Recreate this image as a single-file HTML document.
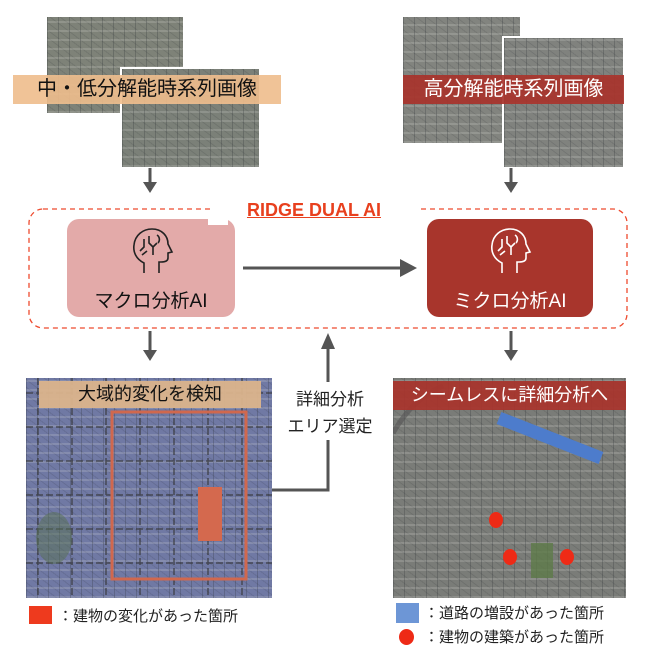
<!DOCTYPE html>
<html><head><meta charset="utf-8"><style>
body{margin:0;width:661px;height:653px;background:#fff;position:relative;overflow:hidden;font-family:"Liberation Sans","Noto Sans CJK JP",sans-serif}
.a{position:absolute}
.sat{position:absolute;background:#7c7f7c;background-image:repeating-linear-gradient(90deg,rgba(40,45,50,.25) 0 1px,transparent 1px 11px),repeating-linear-gradient(0deg,rgba(230,230,225,.18) 0 2px,transparent 2px 9px),repeating-linear-gradient(37deg,rgba(30,35,40,.12) 0 1px,transparent 1px 6px)}
.lbl{position:absolute;text-align:center;font-size:20px;line-height:30px;white-space:nowrap}
</style></head><body>

<!-- top-left images -->
<div class="sat" style="left:47px;top:17px;width:136px;height:96px;background-color:#7e8278"></div>
<div class="sat" style="left:120px;top:67px;width:137px;height:98px;background-color:#7b8078;border-left:2px solid #fff;border-top:2px solid #fff"></div>
<div class="lbl" style="left:13px;top:75px;width:268px;height:29px;line-height:29px;background:rgba(238,188,140,.9);color:#111">中・低分解能時系列画像</div>

<!-- top-right images -->
<div class="sat" style="left:403px;top:17px;width:117px;height:126px;background-color:#82847f"></div>
<div class="sat" style="left:502px;top:36px;width:119px;height:129px;background-color:#80827e;border-left:2px solid #fff;border-top:2px solid #fff"></div>
<div class="lbl" style="left:403px;top:75px;width:221px;height:29px;line-height:29px;background:rgba(168,52,44,.93);color:#fff">高分解能時系列画像</div>

<svg class="a" style="left:0;top:0" width="661" height="653">
<g stroke="#555" stroke-width="3" fill="none">
<line x1="150" y1="168" x2="150" y2="186"/><path d="M143,182 L150,193 L157,182" fill="#555" stroke="none"/>
<line x1="511" y1="168" x2="511" y2="186"/><path d="M504,182 L511,193 L518,182" fill="#555" stroke="none"/>
<line x1="243" y1="268" x2="405" y2="268"/><path d="M400,259 L417,268 L400,277z" fill="#555" stroke="none"/>
<line x1="150" y1="331" x2="150" y2="352"/><path d="M143,350 L150,361 L157,350z" fill="#555" stroke="none"/>
<line x1="511" y1="331" x2="511" y2="352"/><path d="M504,350 L511,361 L518,350z" fill="#555" stroke="none"/>
<line x1="328" y1="346" x2="328" y2="382"/><path d="M321,349 L328,333 L335,349z" fill="#555" stroke="none"/>
<polyline points="272,490 328,490 328,440"/>
</g>
<rect x="29" y="209" width="598" height="119" rx="14" fill="none" stroke="#ee4a2e" stroke-width="1.3" stroke-dasharray="5,4"/>
<rect x="210" y="200" width="210" height="18" fill="#fff"/>
</svg>

<div class="a" style="left:230px;top:200px;width:168px;text-align:center;font-weight:bold;font-size:18px;color:#e8401e;text-decoration:underline">RIDGE DUAL AI</div>

<div class="a" style="left:67px;top:219px;width:168px;height:98px;background:#e3aaa9;border-radius:12px"></div>
<div class="a" style="left:208px;top:212px;width:20px;height:13px;background:#fff"></div>
<div class="a" style="left:427px;top:219px;width:166px;height:98px;background:#a8352c;border-radius:12px"></div>

<svg class="a" style="left:130px;top:227px" width="45" height="50" viewBox="0 0 45 50" fill="none" stroke="#222" stroke-width="1.6">
<path d="M14,46 V36 C6,32 3,25 4,18 C5,8 13,2 22,2 C32,2 38,9 38,17 L42,25 L38,26 V31 C38,34 35,35 31,35 H29 V46"/>
<path d="M14,12 V20 L10,24 M19,9 V16 L23,20 V28 M23,20 L27,16 M27,8 C30,10 30,14 28,16 M12,28 L17,24"/>
</svg>
<svg class="a" style="left:488px;top:227px" width="45" height="50" viewBox="0 0 45 50" fill="none" stroke="#fff" stroke-width="1.6">
<path d="M14,46 V36 C6,32 3,25 4,18 C5,8 13,2 22,2 C32,2 38,9 38,17 L42,25 L38,26 V31 C38,34 35,35 31,35 H29 V46"/>
<path d="M14,12 V20 L10,24 M19,9 V16 L23,20 V28 M23,20 L27,16 M27,8 C30,10 30,14 28,16 M12,28 L17,24"/>
</svg>
<div class="a" style="left:67px;top:286px;width:168px;text-align:center;font-size:19px;color:#111">マクロ分析AI</div>
<div class="a" style="left:427px;top:286px;width:166px;text-align:center;font-size:19px;color:#fff">ミクロ分析AI</div>

<!-- bottom left -->
<div class="sat" style="left:26px;top:378px;width:246px;height:220px;background-color:#7079a4"></div>
<svg class="a" style="left:26px;top:378px" width="246" height="220">
<g stroke="#333" stroke-width="1.5" stroke-dasharray="7,3" opacity=".7">
<path d="M0,15H246M0,49H246M0,83H246M0,117H246M0,151H246M0,185H246M12,0V220M46,0V220M80,0V220M114,0V220M148,0V220M182,0V220M216,0V220"/>
</g>
<ellipse cx="28" cy="160" rx="18" ry="26" fill="#55704f" opacity=".5"/>
<rect x="86" y="34" width="134" height="167" fill="none" stroke="#d0684e" stroke-width="3"/>
<rect x="172" y="109" width="24" height="54" fill="#d4694e"/>
</svg>
<div class="lbl" style="left:39px;top:381px;width:222px;height:27px;line-height:27px;font-size:18px;background:rgba(219,180,140,.95);color:#111">大域的変化を検知</div>

<div class="a" style="left:280px;top:386px;width:100px;text-align:center;font-size:17px;line-height:27px;color:#222">詳細分析<br>エリア選定</div>

<!-- bottom right -->
<div class="sat" style="left:393px;top:378px;width:233px;height:220px;background-color:#7a7c78"></div>
<svg class="a" style="left:393px;top:378px" width="233" height="220">
<path d="M0,55 Q20,20 50,8" stroke="#555" stroke-width="5" fill="none" opacity=".6"/>
<rect x="138" y="165" width="22" height="35" fill="#5e7a48" opacity=".8"/>
<line x1="106" y1="40" x2="208" y2="80" stroke="#4d7ccc" stroke-width="13"/>
<ellipse cx="103" cy="142" rx="7" ry="8" fill="#ee2a16"/>
<ellipse cx="117" cy="179" rx="7" ry="8" fill="#ee2a16"/>
<ellipse cx="174" cy="179" rx="7" ry="8" fill="#ee2a16"/>
</svg>
<div class="lbl" style="left:393px;top:381px;width:233px;height:29px;line-height:29px;font-size:18px;background:rgba(168,52,44,.93);color:#fff">シームレスに詳細分析へ</div>

<!-- legends -->
<div class="a" style="left:29px;top:606px;width:23px;height:18px;background:#ee3a1e"></div>
<div class="a" style="left:58px;top:605px;font-size:15px;color:#222">：建物の変化があった箇所</div>
<div class="a" style="left:396px;top:603px;width:23px;height:20px;background:#6d96d6"></div>
<div class="a" style="left:424px;top:602px;font-size:15px;color:#222">：道路の増設があった箇所</div>
<div class="a" style="left:399px;top:629px;width:15px;height:16px;border-radius:50%;background:#ee2a16"></div>
<div class="a" style="left:424px;top:626px;font-size:15px;color:#222">：建物の建築があった箇所</div>
</body></html>
